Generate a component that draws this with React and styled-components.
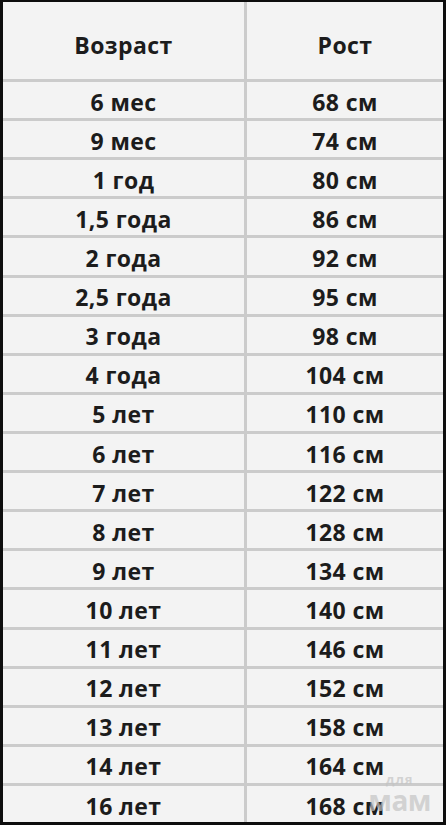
import React from 'react';
import styled, { createGlobalStyle } from 'styled-components';

const GlobalStyle = createGlobalStyle`
  html, body {
    margin: 0;
    padding: 0;
    background: #f2f2f2;
  }
`;

const rows = [
  ['6 мес', '68 см'],
  ['9 мес', '74 см'],
  ['1 год', '80 см'],
  ['1,5 года', '86 см'],
  ['2 года', '92 см'],
  ['2,5 года', '95 см'],
  ['3 года', '98 см'],
  ['4 года', '104 см'],
  ['5 лет', '110 см'],
  ['6 лет', '116 см'],
  ['7 лет', '122 см'],
  ['8 лет', '128 см'],
  ['9 лет', '134 см'],
  ['10 лет', '140 см'],
  ['11 лет', '146 см'],
  ['12 лет', '152 см'],
  ['13 лет', '158 см'],
  ['14 лет', '164 см'],
  ['16 лет', '168 см'],
];

const Table = styled.div`
  position: relative;
  box-sizing: border-box;
  width: 446px;
  height: 825px;
  display: flex;
  flex-direction: column;
  background: #f3f3f3;
  border: 3px solid #0d0d0d;
  border-top-width: 2px;
  font-family: 'Open Sans', 'Liberation Sans', sans-serif;
  font-weight: 700;
  color: #1c1c1c;
`;

const Row = styled.div`
  display: grid;
  grid-template-columns: 244px 1fr;
  flex: ${({ $header }) => ($header ? '0 0 77px' : '1 1 0')};
  border-top: ${({ $header }) => ($header ? 'none' : '3px solid #cbcbcb')};
`;

const Cell = styled.div`
  display: flex;
  align-items: center;
  justify-content: center;
  font-size: 23px;
  line-height: 1;
  letter-spacing: 0.4px;
  padding-top: ${({ $header }) => ($header ? '10px' : '4px')};

  &:first-child {
    border-right: 3px solid #cbcbcb;
  }
`;

const Watermark = styled.div`
  position: absolute;
  right: 12px;
  bottom: 8px;
  display: flex;
  flex-direction: column;
  align-items: center;
  color: rgba(195, 195, 195, 0.7);
  font-family: 'Open Sans', 'Liberation Sans', sans-serif;
  font-weight: 700;
  line-height: 1;
  pointer-events: none;

  span:first-child {
    font-size: 13px;
    letter-spacing: 1px;
  }

  span:last-child {
    font-size: 28px;
    letter-spacing: -0.5px;
  }
`;

const App = () => (
  <>
    <GlobalStyle />
    <Table>
      <Row $header>
        <Cell $header>Возраст</Cell>
        <Cell $header>Рост</Cell>
      </Row>
      {rows.map(([age, height]) => (
        <Row key={age}>
          <Cell>{age}</Cell>
          <Cell>{height}</Cell>
        </Row>
      ))}
      <Watermark>
        <span>для</span>
        <span>мам</span>
      </Watermark>
    </Table>
  </>
);

export default App;
